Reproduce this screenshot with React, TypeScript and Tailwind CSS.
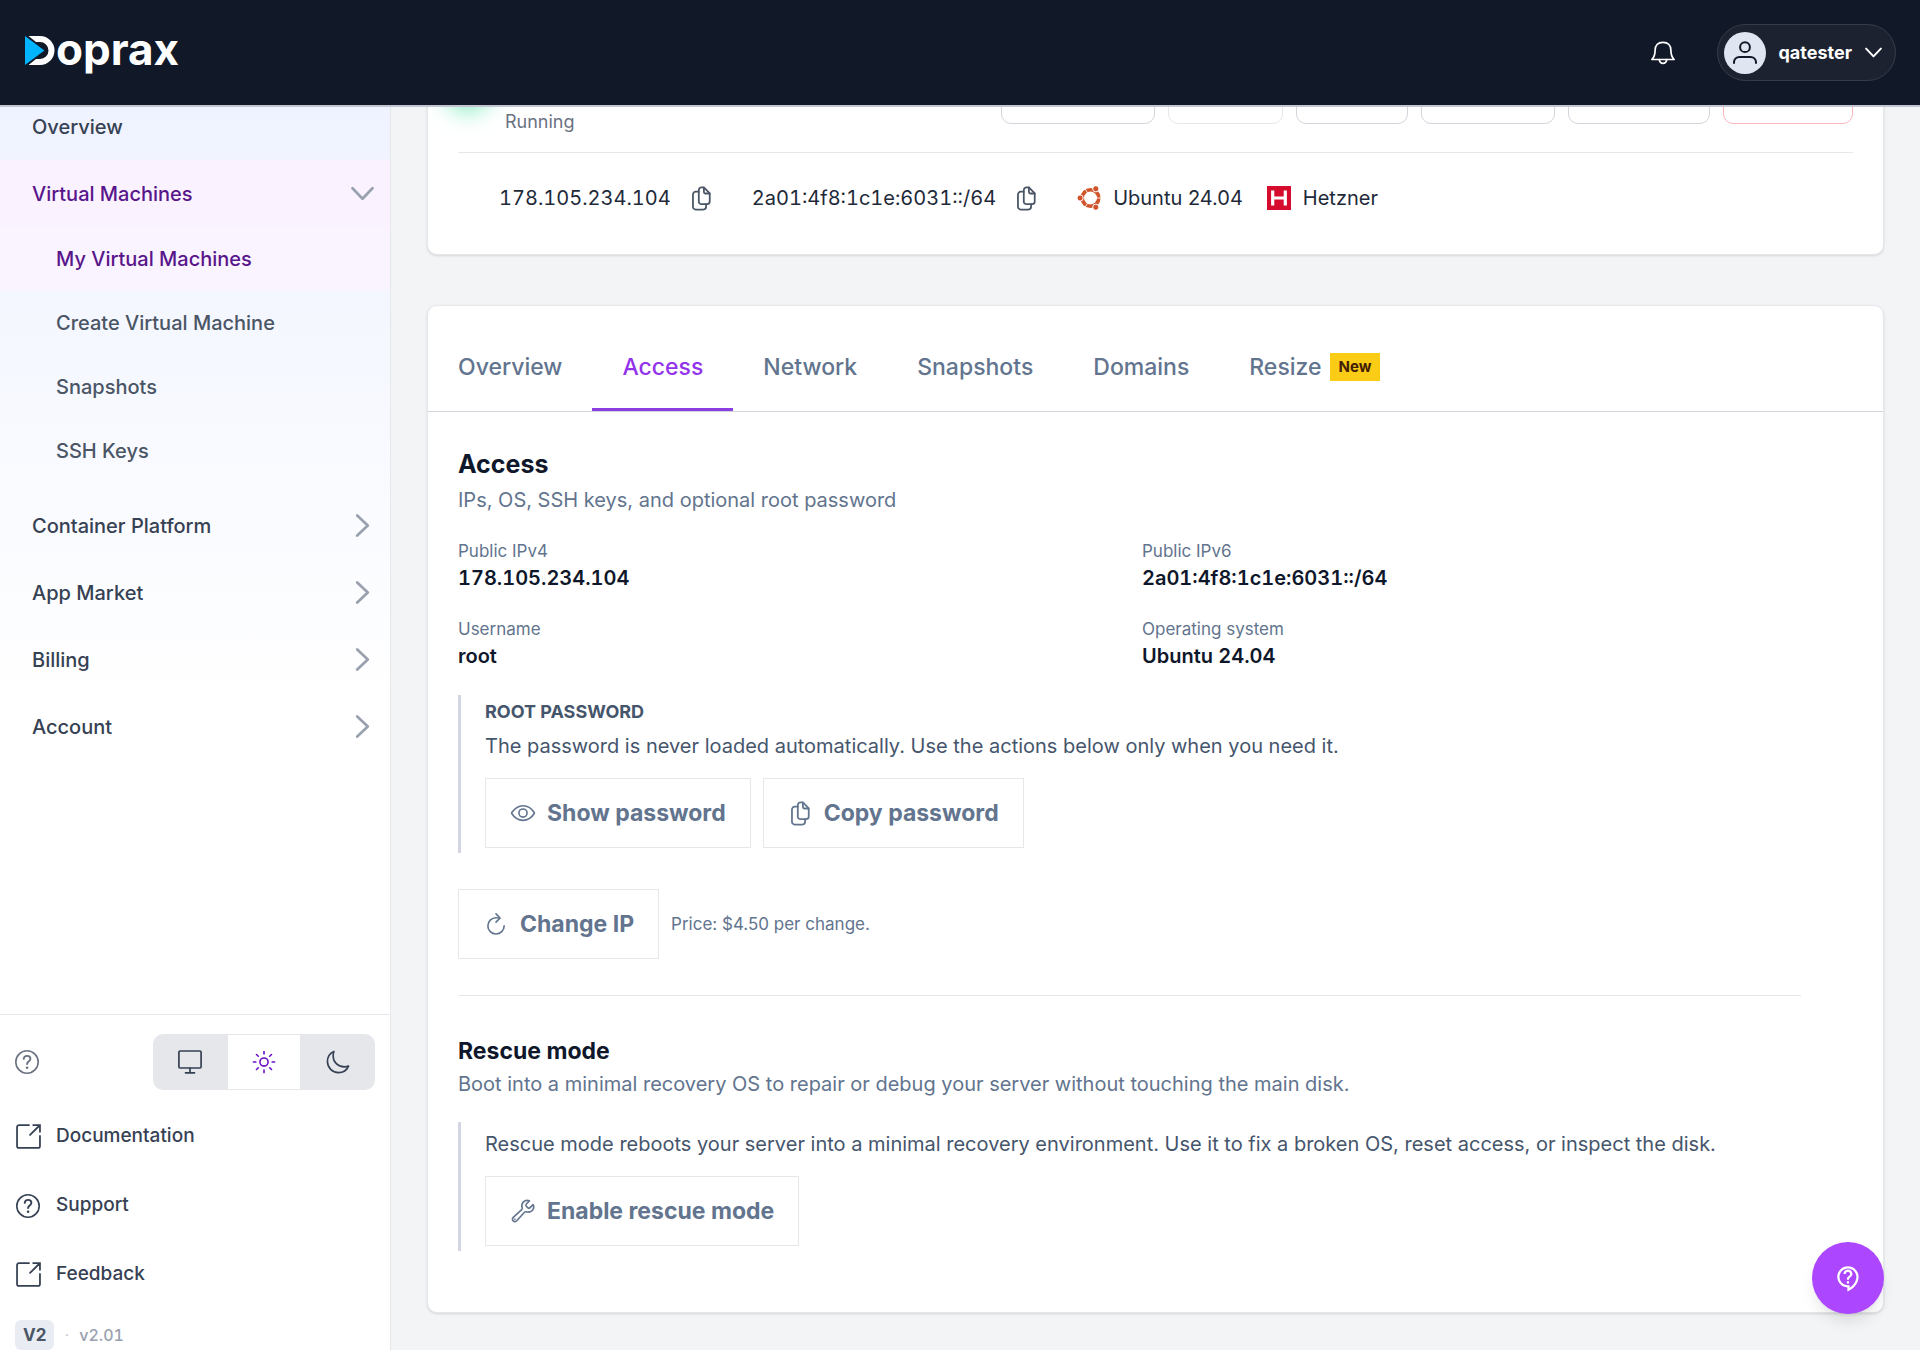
import type { ReactNode } from 'react';
import {
  IoBuildOutline,
  IoEyeOutline,
  IoMoonOutline,
  IoRefreshOutline,
  IoSunnyOutline,
} from 'react-icons/io5';
import { MdOutlineContactSupport } from 'react-icons/md';

function Logo() {
  return (
    <a href="#" aria-label="Doprax" className="flex items-baseline pb-2 text-white">
      <svg viewBox="0 0 31 29" className="h-[29px] w-[31px]">
        <path d="M3.5 0H15a14.5 14.5 0 0 1 0 29H3.5L11 23h4a8.500 8.500 0 0 0 0-17h-4Z" fill="#fff" />
        <path d="M0 0v29L19.4 14.5Z" fill="#00b4ff" />
      </svg>
      <span className="text-[44px] leading-[48px] font-bold">oprax</span>
    </a>
  );
}

function CopyIcon({ className }: { className: string }) {
  return (
    <svg viewBox="0 0 24 24" className={className} fill="none" stroke="currentColor" strokeWidth="1.7" strokeLinecap="round" strokeLinejoin="round">
      <path d="M12 1.3h2.3l5.6 5.8v7.7a2.6 2.6 0 0 1-2.6 2.6h-5.3a2.6 2.6 0 0 1-2.6-2.6V3.900a2.6 2.6 0 0 1 2.6-2.6Z" />
      <path d="M14.3 1.5v4.3a1.4 1.4 0 0 0 1.4 1.4h4.1" />
      <path d="M9.3 5.5H6.4a2.6 2.6 0 0 0-2.6 2.6v11.9a2.6 2.6 0 0 0 2.6 2.6h7.4a2.6 2.6 0 0 0 2.6-2.6v-2.5" />
    </svg>
  );
}

function ChevronIcon({ className }: { className: string }) {
  return (
    <svg viewBox="0 0 24 24" className={className} fill="none" stroke="currentColor" strokeWidth="2.8" strokeLinecap="round" strokeLinejoin="round">
      <path d="M6.5 1.6 17.5 12 6.5 22.4" />
    </svg>
  );
}

function BellIcon() {
  return (
    <svg viewBox="0 0 24 24" className="size-6" fill="none" stroke="currentColor" strokeWidth="1.7" strokeLinejoin="round" strokeLinecap="round">
      <path d="M12 1.3c-5.300 0-7.900 3.300-7.900 7.900 0 5-.900 6.900-3.200 9.300h22.200c-2.300-2.400-3.200-4.300-3.200-9.300 0-4.600-2.600-7.900-7.900-7.900Z" />
      <path d="M8.300 18.700c.3 2.400 1.700 3.700 3.700 3.700s3.400-1.300 3.700-3.700" />
    </svg>
  );
}

function HelpIcon() {
  return (
    <svg viewBox="0 0 24 24" className="size-6" fill="none" stroke="currentColor" strokeWidth="1.6" strokeLinecap="round">
      <circle cx="12" cy="12" r="11.2" />
      <path d="M8.700 8.900c.2-1.900 1.500-3 3.400-3s3.300 1.200 3.300 2.900c0 2.800-3.300 2.700-3.300 5.200" strokeWidth="1.9" />
      <circle cx="12.1" cy="17.7" r="1.3" fill="currentColor" stroke="none" />
    </svg>
  );
}

function ExternalIcon() {
  return (
    <svg viewBox="0 0 24 24" className="size-[25px]" fill="none" stroke="currentColor" strokeWidth="1.7" strokeLinecap="round">
      <path d="M12.5 1H3a2 2 0 0 0-2 2v18a2 2 0 0 0 2 2h18a2 2 0 0 0 2-2v-9.500" />
      <path d="M16.5 1H23v6.500M22.800 1.200 13.500 10.500" />
    </svg>
  );
}

function MonitorIcon() {
  return (
    <svg viewBox="0 0 24 24" className="size-6" fill="none" stroke="currentColor" strokeWidth="1.7" strokeLinecap="round">
      <rect x="0.9" y="1" width="22.2" height="17" rx="1.2" />
      <path d="M12 18v4.500M7.500 22.800h9" />
    </svg>
  );
}

function UserIcon() {
  return (
    <svg viewBox="0 0 24 24" className="size-6" fill="none" stroke="currentColor" strokeWidth="2" strokeLinecap="round">
      <circle cx="12" cy="6.2" r="4.9" />
      <path d="M1 22v-.5c0-3.200 2.500-5.500 5.500-5.500h11c3 0 5.500 2.300 5.500 5.500v.5" />
    </svg>
  );
}

function UbuntuIcon() {
  return (
    <svg viewBox="0 0 24 24" className="size-6">
      <g transform="translate(13.5 12)">
        <circle r="8.3" fill="none" stroke="#d0532a" strokeWidth="3.6" />
        <g stroke="#fff" strokeWidth="0.9">
          <path d="M5 0h6M-2.500-4.300l-3-5.200M-2.500 4.300l-3 5.200" />
        </g>
        <g fill="#d0532a" stroke="#fff" strokeWidth="1">
          <circle cx="-10.4" r="3.1" />
          <circle cx="5.3" cy="-9.2" r="3.1" />
          <circle cx="5.3" cy="9.2" r="3.1" />
        </g>
      </g>
    </svg>
  );
}

function HetznerIcon() {
  return (
    <svg viewBox="0 0 24 24" className="size-6">
      <rect width="24" height="24" fill="#d50c2d" />
      <path d="M5.7 4.500v15M18.300 4.500v15M5.700 12h12.600" stroke="#fff" strokeWidth="3.2" fill="none" />
    </svg>
  );
}

const machineLinks = ['My Virtual Machines', 'Create Virtual Machine', 'Snapshots', 'SSH Keys'];
const sections = ['Container Platform', 'App Market', 'Billing', 'Account'];

function Sidebar() {
  return (
    <aside className="w-[391px] shrink-0 flex flex-col justify-between border-r border-gray-200 bg-white bg-linear-to-b from-[#eef2ff] to-white to-50% pt-[26px] font-medium text-gray-700">
      <nav className="text-xl">
        <a href="#" className="flex h-[67px] items-center px-8">Overview</a>
        <a href="#" className="flex h-[67px] items-center justify-between bg-[#faf3ff] pl-8 pr-4 text-[#59168b]">
          Virtual Machines
          <ChevronIcon className="size-[23px] rotate-90 text-gray-400" />
        </a>
        <div className="pb-[9px]">
          {machineLinks.map((label, index) => (
            <a
              key={label}
              href="#"
              className={`flex h-16 items-center pl-14 ${index === 0 ? 'bg-[#f9f4ff] text-[#59168b]' : 'text-gray-600'}`}
            >
              {label}
            </a>
          ))}
        </div>
        {sections.map((label) => (
          <a key={label} href="#" className="flex h-[67px] items-center justify-between pl-8 pr-4">
            {label}
            <ChevronIcon className="size-[23px] text-gray-400" />
          </a>
        ))}
      </nav>

      <div className="border-t border-gray-200 bg-white text-[19px]">
        <div className="flex items-center justify-between pl-[15px] pr-[15px] pt-[19px] pb-3">
          <button aria-label="Help" className="text-gray-500"><HelpIcon /></button>
          <div className="flex overflow-hidden rounded-[10px] bg-gray-200 text-[26px]">
            <button aria-label="System theme" className="flex h-14 w-[74px] items-center justify-center"><MonitorIcon /></button>
            <button aria-label="Light theme" aria-pressed="true" className="flex h-14 w-[74px] items-center justify-center border border-gray-200 bg-white text-[#6d0fc8]"><IoSunnyOutline /></button>
            <button aria-label="Dark theme" className="flex h-14 w-[74px] items-center justify-center"><IoMoonOutline /></button>
          </div>
        </div>
        <a href="#" className="flex h-[69px] items-center gap-[15px] pl-4"><ExternalIcon />Documentation</a>
        <a href="#" className="flex h-[69px] items-center gap-4 pl-4"><HelpIcon />Support</a>
        <a href="#" className="flex h-[69px] items-center gap-[15px] pl-4"><ExternalIcon />Feedback</a>
        <div className="flex items-center gap-2.5 pl-[15px] pt-[11px] text-base text-gray-400">
          <span className="rounded-md bg-[#e9edf3] px-2 text-[17px] leading-[30px] font-bold text-gray-600">V2</span>
          <span className="text-gray-300">·</span>
          <span className="tabular-nums">v2.01</span>
        </div>
      </div>
    </aside>
  );
}

function Header() {
  return (
    <header className="relative z-10 flex h-[107px] items-center justify-between border-b-2 border-[#c3c5d3] bg-[#111827] pl-[25px] pr-6">
      <Logo />
      <div className="flex items-center gap-[42px] text-white">
        <button aria-label="Notifications"><BellIcon /></button>
        <button className="flex h-[57px] items-center gap-[13px] rounded-full border border-[#363c4a] bg-[#1c2230] pl-1.5 pr-[13px] text-lg font-bold">
          <span className="flex size-[42px] items-center justify-center rounded-full bg-[#e0e5f2] text-[#111827]"><UserIcon /></span>
          qatester
          <ChevronIcon className="size-[17px] rotate-90" />
        </button>
      </div>
    </header>
  );
}

const actions = [
  { label: 'Console', style: 'w-[154px] border-gray-300' },
  { label: 'Start', style: 'w-[115px] border-gray-200' },
  { label: 'Stop', style: 'w-[112px] border-gray-300' },
  { label: 'Reboot', style: 'w-[134px] border-gray-300' },
  { label: 'Rebuild', style: 'w-[142px] border-gray-300' },
  { label: 'Delete', style: 'w-[130px] border-[#fbb5bf]' },
];

function MachineCard() {
  return (
    <section className="rounded-[10px] border border-gray-200 bg-white px-[30px] text-xl text-gray-800 shadow-sm">
      <div className="flex items-start justify-between border-b border-gray-200 pb-[18px]">
        <div className="flex h-[66px] items-end gap-[27px] text-[18px] leading-6 text-gray-500">
          <span className="mb-9 size-5 rounded-full bg-emerald-300 shadow-[0_0_24px_12px_#6ee7b7]" />
          Running
        </div>
        <div className="flex gap-[13px]">
          {actions.map((action) => (
            <button key={action.label} aria-label={action.label} className={`h-14 rounded-[10px] border ${action.style}`} />
          ))}
        </div>
      </div>
      <div className="flex items-center pl-[41px] pt-[31px] pb-[42px] leading-7">
        <span className="tabular-nums">178.105.234.104</span>
        <button aria-label="Copy IPv4" className="ml-[18px] text-gray-600"><CopyIcon className="size-[25px]" /></button>
        <span className="ml-[38px] tabular-nums">2a01:4f8:1c1e:6031::/64</span>
        <button aria-label="Copy IPv6" className="ml-[18px] mr-[38px] text-gray-600"><CopyIcon className="size-[25px]" /></button>
        <span className="flex items-center gap-3"><UbuntuIcon />Ubuntu 24.04</span>
        <span className="ml-6 flex items-center gap-3"><HetznerIcon />Hetzner</span>
      </div>
    </section>
  );
}

const tabs = ['Overview', 'Access', 'Network', 'Snapshots', 'Domains', 'Resize'];

const details = [
  { label: 'Public IPv4', value: '178.105.234.104' },
  { label: 'Public IPv6', value: '2a01:4f8:1c1e:6031::/64' },
  { label: 'Username', value: 'root' },
  { label: 'Operating system', value: 'Ubuntu 24.04' },
];

function OutlineButton({ icon, children }: { icon: ReactNode; children: ReactNode }) {
  return (
    <button className="flex h-[70px] items-center gap-[11px] border border-gray-200 px-6 text-[23px] font-bold text-slate-500">
      {icon}
      {children}
    </button>
  );
}

function AccessCard() {
  return (
    <section className="mt-[50px] rounded-[10px] border border-gray-200 bg-white shadow-sm">
      <nav className="flex border-b border-gray-300 pt-5">
        {tabs.map((tab) => (
          <a
            key={tab}
            href="#"
            className={`flex h-[85px] items-center gap-2 border-b-[3px] px-[30px] text-[23px] font-medium ${
              tab === 'Access' ? 'border-[#8b3fe0] text-[#9333ea]' : 'border-transparent text-slate-500'
            }`}
          >
            {tab}
            {tab === 'Resize' && (
              <span className="bg-[#facc15] px-[9px] text-[15px] leading-7 font-bold text-[#422006]">New</span>
            )}
          </a>
        ))}
      </nav>

      <div className="pl-[30px] pr-[82px] pt-[34px] pb-[61px] text-xl leading-7">
        <h2 className="text-[25px] leading-9 font-bold text-slate-900">Access</h2>
        <p className="mt-1 text-slate-500">IPs, OS, SSH keys, and optional root password</p>

        <dl className="mt-[25px] grid grid-cols-2 gap-[25px]">
          {details.map((item) => (
            <div key={item.label}>
              <dt className="text-[17px] leading-6 text-slate-500">{item.label}</dt>
              <dd className="mt-px font-semibold tabular-nums text-slate-900">{item.value}</dd>
            </div>
          ))}
        </dl>

        <div className="mt-[25px] border-l-[3px] border-[#d3d5e3] py-[5px] pl-6 text-slate-600">
          <h3 className="text-[18px] leading-6 font-bold">ROOT PASSWORD</h3>
          <p className="mt-2">The password is never loaded automatically. Use the actions below only when you need it.</p>
          <div className="mt-[18px] flex gap-3">
            <OutlineButton icon={<IoEyeOutline className="size-[26px]" />}>Show password</OutlineButton>
            <OutlineButton icon={<CopyIcon className="size-[25px]" />}>Copy password</OutlineButton>
          </div>
        </div>

        <div className="mt-9 flex items-center gap-3 text-[17px] text-slate-500">
          <OutlineButton icon={<IoRefreshOutline className="size-[26px]" />}>Change IP</OutlineButton>
          Price: $4.50 per change.
        </div>

        <hr className="mt-9 border-gray-200" />

        <h2 className="mt-[39px] text-[23px] leading-8 font-bold text-slate-900">Rescue mode</h2>
        <p className="mt-[3px] text-slate-500">Boot into a minimal recovery OS to repair or debug your server without touching the main disk.</p>
        <div className="mt-6 border-l-[3px] border-[#d3d5e3] pt-2 pb-[5px] pl-6 text-slate-600">
          <p>Rescue mode reboots your server into a minimal recovery environment. Use it to fix a broken OS, reset access, or inspect the disk.</p>
          <div className="mt-[18px] flex">
            <OutlineButton icon={<IoBuildOutline className="size-[26px]" />}>Enable rescue mode</OutlineButton>
          </div>
        </div>
      </div>
    </section>
  );
}

export default function App() {
  return (
    <div className="flex min-h-screen flex-col bg-gray-100 font-['Inter',sans-serif]">
      <Header />
      <div className="-mt-10 flex flex-1">
        <Sidebar />
        <main className="min-w-0 flex-1 px-9">
          <MachineCard />
          <AccessCard />
        </main>
      </div>
      <button
        aria-label="Contact support"
        className="fixed right-9 bottom-9 flex size-[72px] items-center justify-center rounded-full bg-[#ad46ff] text-[27px] text-white shadow-lg"
      >
        <MdOutlineContactSupport />
      </button>
    </div>
  );
}
